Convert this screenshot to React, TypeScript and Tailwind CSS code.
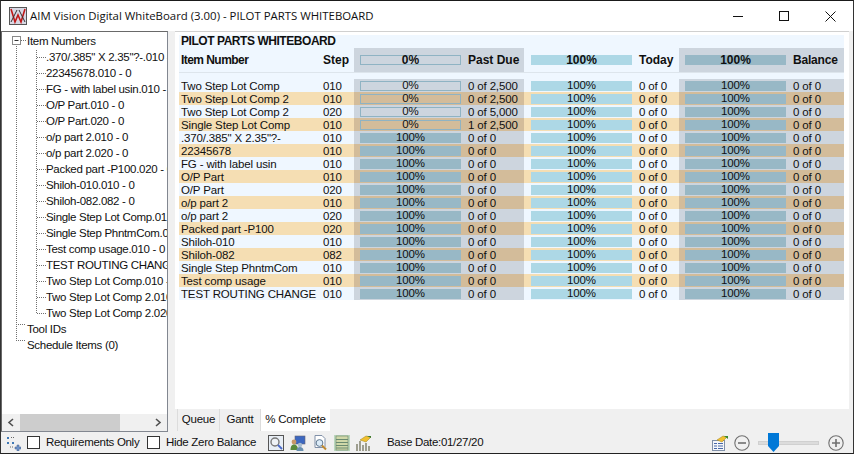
const tree = [
  '.370/.385" X 2.35"?-.010 - 0',
  '22345678.010 - 0',
  'FG - with label usin.010 - 0',
  'O/P Part.010 - 0',
  'O/P Part.020 - 0',
  'o/p part 2.010 - 0',
  'o/p part 2.020 - 0',
  'Packed part -P100.020 - 0',
  'Shiloh-010.010 - 0',
  'Shiloh-082.082 - 0',
  'Single Step Lot Comp.010 - 0',
  'Single Step PhntmCom.010 - 0',
  'Test comp usage.010 - 0',
  'TEST ROUTING CHANGE.010 - 0',
  'Two Step Lot Comp.010 - 0',
  'Two Step Lot Comp 2.010 - 0',
  'Two Step Lot Comp 2.020 - 0',
];

const rows: [string, string, number, string][] = [
  ['Two Step Lot Comp', '010', 0, '0 of 2,500'],
  ['Two Step Lot Comp 2', '010', 0, '0 of 2,500'],
  ['Two Step Lot Comp 2', '020', 0, '0 of 5,000'],
  ['Single Step Lot Comp', '010', 0, '1 of 2,500'],
  ['.370/.385" X 2.35"?-', '010', 100, '0 of 0'],
  ['22345678', '010', 100, '0 of 0'],
  ['FG - with label usin', '010', 100, '0 of 0'],
  ['O/P Part', '010', 100, '0 of 0'],
  ['O/P Part', '020', 100, '0 of 0'],
  ['o/p part 2', '010', 100, '0 of 0'],
  ['o/p part 2', '020', 100, '0 of 0'],
  ['Packed part -P100', '020', 100, '0 of 0'],
  ['Shiloh-010', '010', 100, '0 of 0'],
  ['Shiloh-082', '082', 100, '0 of 0'],
  ['Single Step PhntmCom', '010', 100, '0 of 0'],
  ['Test comp usage', '010', 100, '0 of 0'],
  ['TEST ROUTING CHANGE', '010', 100, '0 of 0'],
];

function Bar({ kind, label, bold }: { kind: 'empty' | 'dark' | 'light'; label: string; bold?: boolean }) {
  const cls =
    kind === 'empty'
      ? 'border border-[#8fb3c3]'
      : kind === 'dark'
        ? 'bg-[#98b8c6]'
        : 'bg-[#add8e6]';
  return (
    <div className={`w-[101px] h-[10px] shrink-0 flex items-center justify-center leading-none ${cls} ${bold ? 'font-bold text-[12px]' : ''}`}>
      {label}
    </div>
  );
}

function Group({ shade, tan, children }: { shade: boolean; tan?: boolean; children: React.ReactNode }) {
  const bg = shade ? (tan ? 'bg-[#d3bc9a]' : 'bg-[#cdd5de]') : '';
  return <div className={`flex items-center h-full ${bg}`}>{children}</div>;
}

function Row({ r, tan }: { r: [string, string, number, string]; tan: boolean }) {
  return (
    <div className={`flex h-[13px] text-[11.5px] leading-[14px] text-[#101010] tracking-[-0.15px] ${tan ? 'bg-[#f5deb3]' : ''}`}>
      <div className="w-[144px] pl-[2px] whitespace-nowrap overflow-hidden">{r[0]}</div>
      <div className="w-[31px]">{r[1]}</div>
      <Group shade tan={tan}>
        <div className="w-[170px] flex items-center pl-[6px]">
          <Bar kind={r[2] === 0 ? 'empty' : 'dark'} label={`${r[2]}%`} />
          <div className="pl-[7px] whitespace-nowrap">{r[3]}</div>
        </div>
      </Group>
      <Group shade={false}>
        <div className="w-[155px] flex items-center pl-[7px]">
          <Bar kind="light" label="100%" />
          <div className="pl-[7px] whitespace-nowrap">0 of 0</div>
        </div>
      </Group>
      <Group shade tan={tan}>
        <div className="w-[165px] flex items-center pl-[6px]">
          <Bar kind="dark" label="100%" />
          <div className="pl-[7px] whitespace-nowrap">0 of 0</div>
        </div>
      </Group>
    </div>
  );
}

function AppIcon() {
  return (
    <svg width="18" height="18" viewBox="0 0 18 18" className="shrink-0">
      <rect x="0.5" y="0.5" width="17" height="17" fill="#d8d8e4" stroke="#555" />
      <path d="M2 2 L6 15 L9 8 L12 15 L16 2" stroke="#c01818" strokeWidth="1.6" fill="none" />
      <path d="M2 15 L8 3 M10 3 L16 15" stroke="#333" strokeWidth="1" fill="none" />
    </svg>
  );
}

function Check() {
  return <div className="w-[13px] h-[13px] bg-white border border-[#333] shrink-0" />;
}

function TreeIcon() {
  return (
    <svg width="16" height="16" viewBox="0 0 16 16" className="shrink-0">
      <path d="M2 2h2v2H2zM2 7h2v2H2zM7 7h2v2H7z" fill="#3f78b5" />
      <path d="M6 2.5h4M5 12h3" stroke="#666" strokeDasharray="1 1" />
      <path d="M10 12h2v-2h2v2h2v2h-2v2h-2v-2h-2z" fill="#6f92c8" stroke="#45618f" strokeWidth="0.5" />
    </svg>
  );
}

function IconSearchBoxed() {
  return (
    <div className="w-[16px] h-[16px] border border-[#555] bg-[#e8eef5] shrink-0 flex items-center justify-center">
      <svg width="14" height="14" viewBox="0 0 14 14">
        <circle cx="6" cy="6" r="4" fill="#eef2f6" stroke="#777" strokeWidth="1.4" />
        <path d="M9 9l4 4" stroke="#4868c8" strokeWidth="1.8" />
      </svg>
    </div>
  );
}

function IconPeople() {
  return (
    <svg width="16" height="16" viewBox="0 0 16 16" className="shrink-0">
      <rect x="5" y="1" width="10" height="8" fill="#3d68c0" stroke="#667" strokeWidth="0.6" />
      <circle cx="4" cy="7" r="2.4" fill="#c89868" />
      <path d="M0.5 15c0-4 1.5-5.5 3.5-5.5S8 11 8 15z" fill="#5a8a3c" />
      <circle cx="10" cy="10" r="2.2" fill="#a8bcd0" />
      <path d="M6.5 16c0-3 1.5-4 3.5-4s3.5 1 3.5 4z" fill="#6a90b0" />
    </svg>
  );
}

function IconDocSearch() {
  return (
    <svg width="16" height="16" viewBox="0 0 16 16" className="shrink-0">
      <path d="M3 0.5h7l3 3v9H3z" fill="#fff" stroke="#8090a8" />
      <circle cx="7.5" cy="8" r="3.4" fill="#dcecf8" stroke="#607890" />
      <path d="M10 10.5l4 4" stroke="#c08a30" strokeWidth="2" />
    </svg>
  );
}

function IconList() {
  return (
    <svg width="16" height="16" viewBox="0 0 16 16" className="shrink-0">
      <rect x="0" y="0" width="16" height="16" fill="#bcd8bc" />
      <rect x="2" y="1" width="12" height="14" fill="#cfd8a8" stroke="#6a7f6a" strokeWidth="0.6" />
      <path d="M2 4.5h12M2 7.5h12M2 10.5h12M2 13h12" stroke="#6a8a70" />
    </svg>
  );
}

function IconChart() {
  return (
    <svg width="16" height="16" viewBox="0 0 16 16" className="shrink-0">
      <path d="M1 16V9M4 16V6M7 16V10M10 16V8M13 16V11" stroke="#8a8a78" strokeWidth="1.6" />
      <path d="M4 5L10 1l5 1-5 5z" fill="#f0c030" stroke="#a08020" strokeWidth="0.5" />
      <path d="M11 1l4 0 0 2z" fill="#3a7a30" />
    </svg>
  );
}

function IconForm() {
  return (
    <svg width="16" height="16" viewBox="0 0 16 16" className="shrink-0">
      <rect x="0.5" y="5.5" width="12" height="10" fill="#f4f6fa" stroke="#8090a8" />
      <path d="M2 8.5h3M6 8.5h5M2 11h3M6 11h5M2 13.5h3M6 13.5h5" stroke="#4868a8" />
      <path d="M5 5L11 1l4 1-5 5z" fill="#f0c030" stroke="#a08020" strokeWidth="0.5" />
      <path d="M12 1l4 0 0 3z" fill="#3a8a30" />
    </svg>
  );
}

function Circle({ plus }: { plus?: boolean }) {
  return (
    <svg width="16" height="16" viewBox="0 0 16 16" className="shrink-0">
      <circle cx="8" cy="8" r="7.2" fill="#f0f0f0" stroke="#707070" strokeWidth="1.1" />
      <path d={plus ? 'M4 8h8M8 4v8' : 'M4 8h8'} stroke="#707070" strokeWidth="1.6" />
    </svg>
  );
}

export default function App() {
  return (
    <div
      className="w-[854px] h-[454px] overflow-hidden flex flex-col bg-[#f0f0f0] border border-t-[#1a1a1a] border-x-[#333] border-b-[#222] text-[#101010] text-[11.5px]"
      style={{ fontFamily: '"Liberation Sans", Arial, sans-serif' }}
    >
      {/* title bar */}
      <div className="h-[30px] shrink-0 bg-white flex items-center pl-[8px]">
        <AppIcon />
        <div
          className="ml-[3px] text-[11.4px] text-[#111] whitespace-nowrap"
          style={{ fontFamily: '"Open Sans", sans-serif' }}
        >
          AIM Vision Digital WhiteBoard (3.00) - PILOT PARTS WHITEBOARD
        </div>
        <div className="ml-auto flex items-center h-full">
          <div className="w-[46px] flex justify-center">
            <svg width="10" height="10" viewBox="0 0 10 10"><path d="M0 5.5h10" stroke="#111" /></svg>
          </div>
          <div className="w-[46px] flex justify-center">
            <svg width="10" height="10" viewBox="0 0 10 10"><rect x="0.5" y="0.5" width="9" height="9" fill="none" stroke="#111" /></svg>
          </div>
          <div className="w-[46px] flex justify-center">
            <svg width="11" height="11" viewBox="0 0 11 11"><path d="M0.5 0.5l10 10M10.5 0.5l-10 10" stroke="#111" /></svg>
          </div>
        </div>
      </div>

      {/* main */}
      <div className="flex flex-1 min-h-0">
        {/* tree panel */}
        <div className="w-[167px] shrink-0 flex flex-col bg-white border border-[#828790] border-l-[#696969] border-t-[#696969]">
          <div className="relative flex-1 min-h-0 overflow-hidden pt-[1px] text-[11.5px] leading-[16px] tracking-[-0.3px]">
            <svg className="absolute left-0 top-0" width="46" height="320" viewBox="0 0 46 320">
              <g stroke="#707070" strokeDasharray="1 1" fill="none">
                <path d="M14.5 14v293" />
                <path d="M34.5 18v263" />
                <path d="M19 8.5h5" />
                <path d="M14 292.5h10M14 308.5h10" />
                {tree.map((_, i) => (
                  <path key={i} d={`M35 ${25 + i * 16}.5h9`} />
                ))}
              </g>
              <rect x="10.5" y="4.5" width="8" height="8" fill="#fff" stroke="#8a8a8a" />
              <path d="M12.5 8.5h4" stroke="#333" />
            </svg>
            <div className="h-[16px] pl-[25px] whitespace-nowrap">Item Numbers</div>
            {tree.map((t) => (
              <div key={t} className="h-[16px] pl-[44px] whitespace-nowrap">{t}</div>
            ))}
            <div className="h-[16px] pl-[25px] whitespace-nowrap">Tool IDs</div>
            <div className="h-[16px] pl-[25px] whitespace-nowrap">Schedule Items (0)</div>
          </div>
          <div className="h-[17px] shrink-0 bg-[#f0f0f0] flex items-center">
            <div className="w-[18px] flex justify-center">
              <svg width="8" height="9" viewBox="0 0 8 9"><path d="M6 1L2 4.5 6 8" fill="none" stroke="#505050" strokeWidth="1.6" /></svg>
            </div>
            <div className="w-[100px] h-full bg-[#cdcdcd]" />
            <div className="flex-1" />
            <div className="w-[18px] flex justify-center">
              <svg width="8" height="9" viewBox="0 0 8 9"><path d="M2 1l4 3.5L2 8" fill="none" stroke="#505050" strokeWidth="1.6" /></svg>
            </div>
          </div>
        </div>

        {/* right side */}
        <div className="flex-1 flex flex-col min-w-0 pl-[7px] pr-[4px]">
          <div className="h-[378px] shrink-0 bg-white border-t border-[#d0d0d0] pl-[4px] pr-[4px] pt-[3px]">
            <div className="w-[665px] bg-[#eff7ff]">
              <div className="h-[13px] pl-[2px] font-bold text-[12px] leading-[13px] tracking-[-0.45px] whitespace-nowrap">
                PILOT PARTS WHITEBOARD
              </div>
              <div className="flex h-[25px] text-[12px] font-bold mb-[6px] border-b border-[#dde5ec]">
                <div className="w-[144px] pl-[2px] flex items-center tracking-[-0.55px]">Item Number</div>
                <div className="w-[31px] flex items-center">Step</div>
                <div className="w-[170px] flex items-center pl-[6px] bg-[#cdd5de]">
                  <Bar kind="empty" label="0%" bold />
                  <div className="pl-[7px] whitespace-nowrap">Past Due</div>
                </div>
                <div className="w-[155px] flex items-center pl-[7px]">
                  <Bar kind="light" label="100%" bold />
                  <div className="pl-[7px] whitespace-nowrap">Today</div>
                </div>
                <div className="w-[165px] flex items-center pl-[6px] bg-[#cdd5de]">
                  <Bar kind="dark" label="100%" bold />
                  <div className="pl-[7px] whitespace-nowrap tracking-[-0.2px]">Balance</div>
                </div>
              </div>
              {rows.map((r, i) => (
                <Row key={i} r={r} tan={i % 2 === 1} />
              ))}
            </div>
          </div>

          {/* tabs */}
          <div className="h-[22px] flex text-[11.5px] tracking-[-0.2px] pl-[2px] items-stretch">
            <div className="w-[43px] border-x border-[#dcdcdc] flex items-center justify-center">Queue</div>
            <div className="w-[41px] border-r border-[#dcdcdc] flex items-center justify-center">Gantt</div>
            <div className="w-[69px] bg-white flex items-center justify-center">% Complete</div>
          </div>
        </div>
      </div>

      {/* bottom toolbar */}
      <div className="h-[21px] shrink-0 flex items-center pl-[4px] pr-[9px] text-[11.5px] tracking-[-0.3px]">
        <TreeIcon />
        <div className="w-[6px]" />
        <Check />
        <div className="ml-[6px] w-[101px] whitespace-nowrap">Requirements Only</div>
        <Check />
        <div className="ml-[6px] w-[102px] whitespace-nowrap">Hide Zero Balance</div>
        <div className="flex items-center gap-[6px]">
          <IconSearchBoxed />
          <IconPeople />
          <IconDocSearch />
          <IconList />
          <IconChart />
        </div>
        <div className="ml-[15px] whitespace-nowrap">Base Date:01/27/20</div>
        <div className="ml-auto flex items-center">
          <IconForm />
          <div className="w-[6px]" />
          <Circle />
          <div className="relative w-[61px] h-[4px] ml-[8px] mr-[9px] bg-[#dcdcdc] border border-[#d0d0d0]">
            <svg className="absolute left-[9px] top-[-9px]" width="11" height="19" viewBox="0 0 11 19">
              <path d="M0 0h11v13l-5.5 6L0 13z" fill="#0078d7" />
            </svg>
          </div>
          <Circle plus />
        </div>
      </div>
    </div>
  );
}
